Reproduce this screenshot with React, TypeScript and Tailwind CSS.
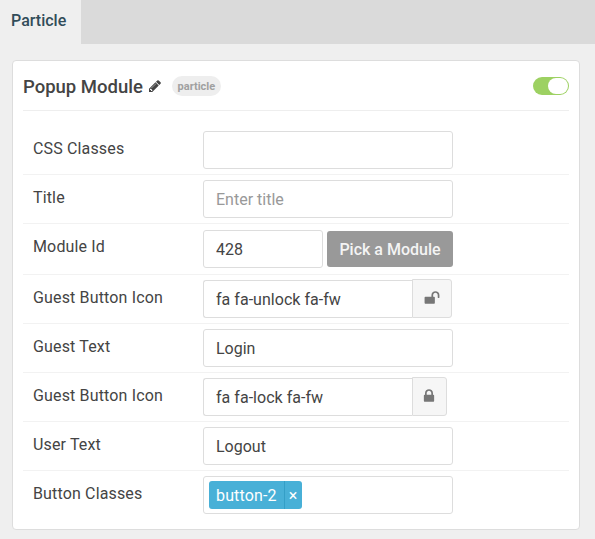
import React from "react";

const ICONS = {
  pencil:
    "M491 1536l91-91-235-235-91 91v107h128v128h107zm523-928q0-22-22-22-10 0-17 7l-542 542q-7 7-7 17 0 22 22 22 10 0 17-7l542-542q7-7 7-17zm-54-192l416 416-832 832h-416v-416zm683 96q0 53-37 90l-166 166-416-416 166-165q36-38 90-38 53 0 91 38l235 234q37 39 37 91z",
  lock: "M640 768h512v-192q0-106-75-181t-181-75-181 75-75 181v192zm832 96v576q0 40-28 68t-68 28h-960q-40 0-68-28t-28-68v-576q0-40 28-68t68-28h32v-192q0-184 132-316t316-132 316 132 132 316v192h32q40 0 68 28t28 68z",
  unlock:
    "M1728 576v256q0 26-19 45t-45 19h-64q-26 0-45-19t-19-45v-256q0-106-75-181t-181-75-181 75-75 181v192h96q40 0 68 28t28 68v576q0 40-28 68t-68 28h-960q-40 0-68-28t-28-68v-576q0-40 28-68t68-28h672v-192q0-185 131.500-316.500t316.500-131.500 316.500 131.500 131.500 316.500z",
};

function Icon({ name, className }: { name: keyof typeof ICONS; className: string }) {
  return (
    <svg viewBox="0 0 1792 1792" fill="currentColor" className={className} aria-hidden="true">
      <path d={ICONS[name]} />
    </svg>
  );
}

function Row({
  label,
  className = "h-[49px] pt-[5px]",
  children,
}: {
  label: string;
  className?: string;
  children: React.ReactNode;
}) {
  return (
    <div className={`flex items-start border-b border-[#f2f2f2] pl-[10px] last:border-b-0 ${className}`}>
      <div className="mt-[6px] w-[170px] shrink-0 whitespace-nowrap leading-6 tracking-[0.15px]">{label}</div>
      {children}
    </div>
  );
}

function Field({ className = "w-[250px] rounded-[3px]", ...props }: React.InputHTMLAttributes<HTMLInputElement>) {
  return (
    <input
      type="text"
      className={`h-[38px] shrink-0 border border-[#dddddd] bg-white px-3 text-[#444444] outline-none placeholder:text-[#999999] ${className}`}
      {...props}
    />
  );
}

function IconField({ icon, value, addon }: { icon: "lock" | "unlock"; value: string; addon: string }) {
  return (
    <div className="-mt-px flex items-end">
      <Field defaultValue={value} className="w-[209px] rounded-l-[3px] border-r-0 tracking-[0.03px]" />
      <div className={`flex h-[39px] items-center rounded-r-[3px] border border-[#dddddd] bg-[#f6f6f6] text-[#777777] ${addon}`}>
        <Icon name={icon} className="-mt-px size-4" />
      </div>
    </div>
  );
}

export default function App() {
  return (
    <div className="h-[539px] w-[595px] overflow-hidden bg-[#efefef] font-[Roboto,sans-serif] text-[16px] text-[#444444]">
      <div className="flex h-11 bg-[#dadada]">
        <div className="w-[81px] bg-[#efefef] pt-[9px] pl-[11px] font-medium leading-6 text-[#314c59]">Particle</div>
      </div>
      <div className="mt-4 ml-3 h-[470px] w-[568px] rounded-[4px] border border-[#dddddd] bg-white px-[10px]">
        <div className="flex h-[50px] items-center border-b border-[#eeeeee]">
          <h4 className="mt-[2px] whitespace-nowrap text-[18.5px] font-medium leading-6">Popup Module</h4>
          <Icon name="pencil" className="ml-[5px] mt-px size-[14px]" />
          <span className="ml-[10px] flex h-5 w-[49px] items-center justify-center rounded-full bg-[#eeeeee] pt-[3px] text-[11px] font-bold leading-4 text-[#a0a0a0]">
            particle
          </span>
          <div className="ml-auto flex h-[18px] w-9 items-center justify-end rounded-full bg-[#9dd162] pr-px">
            <div className="h-4 w-5 rounded-full bg-white" />
          </div>
        </div>
        <div className="pt-[15px]">
          <Row label="CSS Classes">
            <Field />
          </Row>
          <Row label="Title">
            <Field placeholder="Enter title" />
          </Row>
          <Row label="Module Id" className="h-[51px] pt-[5px]">
            <div className="mt-px flex items-start">
              <Field defaultValue="428" className="w-[120px] rounded-[3px]" />
              <button className="mt-px ml-1 h-9 w-[126px] whitespace-nowrap rounded-[3px] bg-[#999999] pt-px font-medium text-[#f4f4f4]">
                Pick a Module
              </button>
            </div>
          </Row>
          <Row label="Guest Button Icon">
            <IconField icon="unlock" value="fa fa-unlock fa-fw" addon="w-10 pl-[11px]" />
          </Row>
          <Row label="Guest Text">
            <Field defaultValue="Login" />
          </Row>
          <Row label="Guest Button Icon">
            <IconField icon="lock" value="fa fa-lock fa-fw" addon="w-[35px] pl-2" />
          </Row>
          <Row label="User Text">
            <Field defaultValue="Logout" />
          </Row>
          <Row label="Button Classes">
            <div className="flex h-[38px] w-[250px] items-center rounded-[3px] border border-[#dddddd] px-[5px]">
              <div className="flex h-7 rounded-[3px] bg-[#48b0d7] leading-[30px] text-white">
                <span className="w-[75px] whitespace-nowrap pl-[7px] tracking-[0.15px]">button-2</span>
                <span className="w-[18px] border-l border-[#349fc7] pr-px text-center leading-[29px]">×</span>
              </div>
            </div>
          </Row>
        </div>
      </div>
    </div>
  );
}
